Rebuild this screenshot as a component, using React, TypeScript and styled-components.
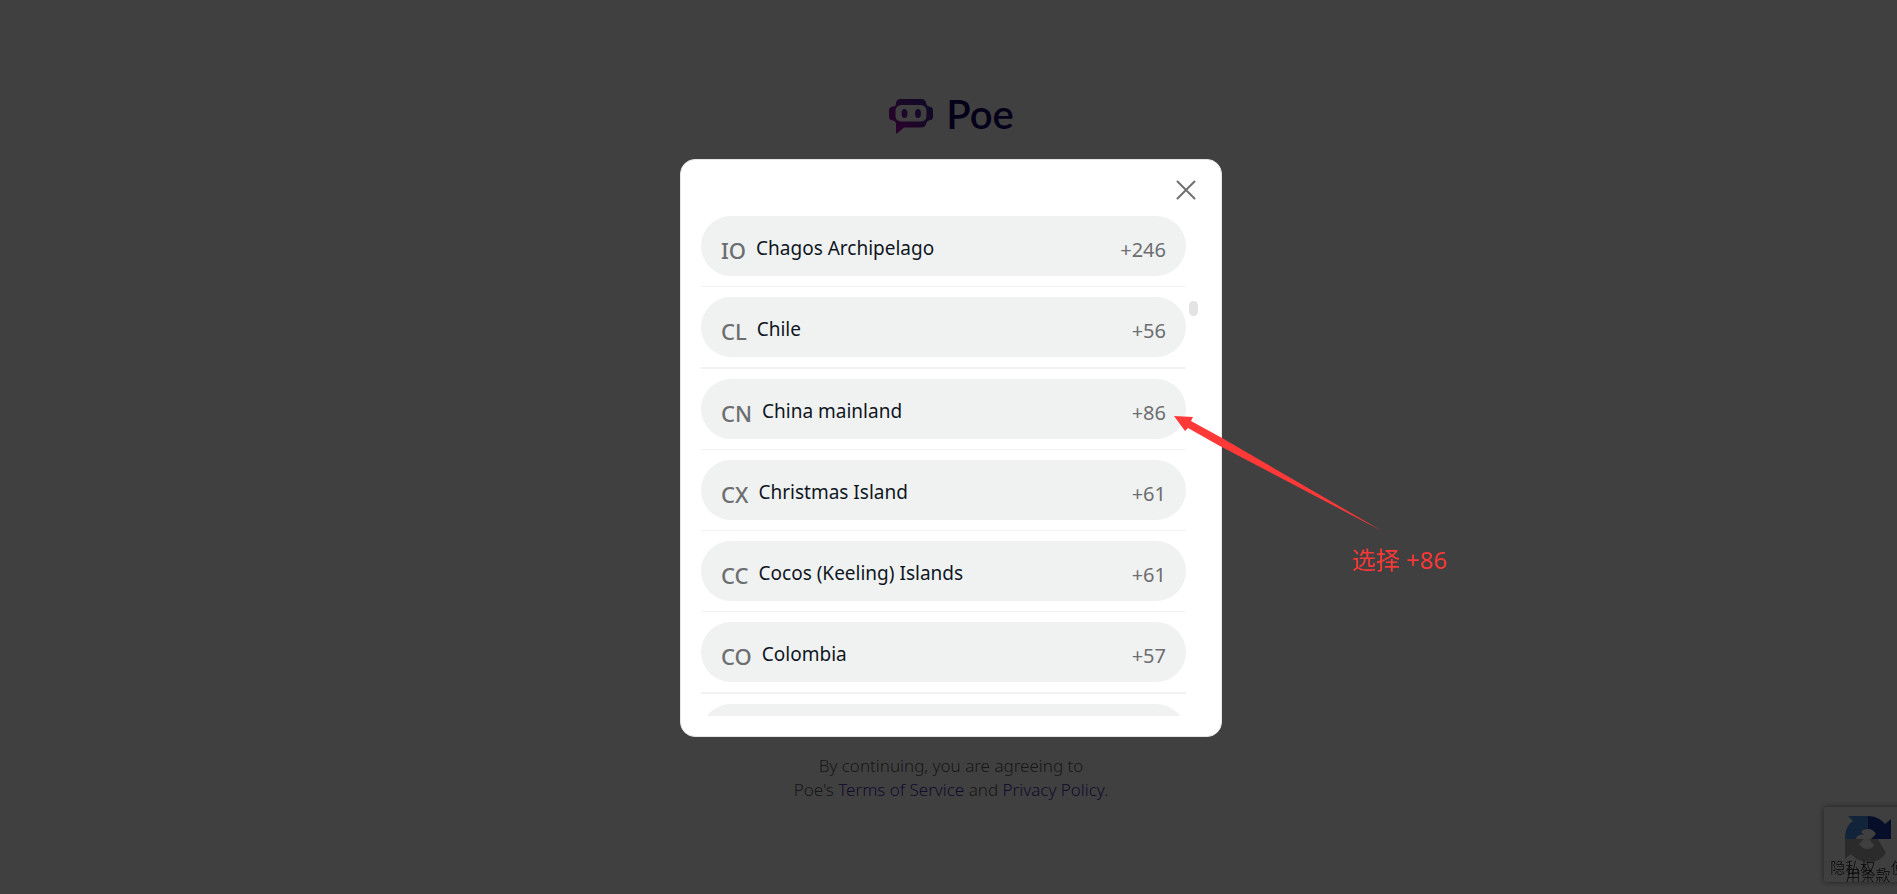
import React from "react";
import styled, { createGlobalStyle } from "styled-components";

const latin = `"Noto Sans", "Open Sans", "Noto Sans CJK SC", sans-serif`;

const GlobalStyle = createGlobalStyle`
  * { box-sizing: border-box; }
  body { margin: 0; background: #fff; font-family: ${latin}; overflow: hidden; }
`;

const Page = styled.div`
  min-height: 100vh;
  display: flex;
  flex-direction: column;
  justify-content: space-between;
  align-items: center;
  padding: 98px 0 92px 5px;
`;

const Brand = styled.div`
  display: flex;
  align-items: flex-start;
  gap: 12px;
`;

const BrandName = styled.h1`
  margin: 0;
  font: 600 40px/32px Lato, sans-serif;
  color: #140064;
`;

const Legal = styled.p`
  margin: 0;
  font-size: 17px;
  font-weight: 300;
  line-height: 24px;
  text-align: center;
  color: #606060;
`;

const LegalLink = styled.a`
  color: #4632b4;
  text-decoration: none;
`;

const RecaptchaBadge = styled.aside`
  position: fixed;
  right: -12px;
  bottom: 12px;
  width: 85px;
  height: 75px;
  padding: 8px 0 0 3px;
  border-radius: 2px;
  background: #fafafa;
  box-shadow: 0 0 6px #808080;
  overflow: hidden;
  text-align: center;

  svg {
    display: block;
    margin: 0 auto;
  }
`;

const BadgeTerms = styled.div`
  font: 300 15px/8px "Noto Sans CJK SC", sans-serif;
  white-space: nowrap;
  color: #111;
`;

const Dash = styled.span`
  margin: 0 2px;
`;

const Overlay = styled.div`
  position: fixed;
  inset: 0;
  display: flex;
  align-items: center;
  justify-content: center;
  padding: 2px 0 0 5px;
  background: rgba(0, 0, 0, 0.75);
`;

const Dialog = styled.section`
  width: 542px;
  max-width: 100%;
  padding: 20px;
  border: 1px solid #e5e5e5;
  border-radius: 15px;
  background: #fff;
`;

const DialogHeader = styled.header`
  display: flex;
  justify-content: flex-end;
  padding-right: 4px;
  margin-bottom: 15px;
`;

const CloseButton = styled.button`
  display: flex;
  width: 21px;
  height: 21px;
  padding: 0;
  border: 0;
  background: none;
  cursor: pointer;
`;

const ListArea = styled.div`
  display: flex;
  gap: 3px;
  height: 500px;
`;

const CountryList = styled.ul`
  flex: none;
  width: 485px;
  margin: 0;
  padding: 0;
  list-style: none;
  overflow: hidden;
`;

const CountryItem = styled.li`
  padding-bottom: 10px;
  margin-bottom: 10px;
  border-bottom: 1px solid #f1f2f2;

  &:nth-child(4n + 2) {
    border-bottom-width: 2px;
  }
`;

const CountryButton = styled.button`
  display: flex;
  align-items: center;
  width: 100%;
  height: 60px;
  padding: 4px 20px 0;
  border: 0;
  border-radius: 30px;
  background: #f0f2f2;
  font: 400 19px/28px ${latin};
  color: #0f1622;
  text-align: left;
  cursor: pointer;
`;

const CountryCode = styled.span`
  margin: 4px 10px 0 0;
  font-size: 22px;
  font-weight: 500;
  color: #6c6e70;
`;

const DialCode = styled.span`
  margin: 4px 0 0 auto;
  font-size: 20px;
  font-weight: 400;
  color: #6c6e70;
`;

const ScrollTrack = styled.div`
  width: 9px;
  padding-top: 85px;
`;

const ScrollThumb = styled.div`
  height: 15px;
  border-radius: 5px;
  background: #e3e3e3;
`;

const Note = styled.div`
  position: absolute;
  left: calc(50% + 225px);
  top: calc(50% - 32px);
  display: flex;
  flex-direction: column;
  width: 274px;
  color: #ff3838;
  pointer-events: none;
`;

const NoteText = styled.span`
  align-self: flex-end;
  margin-top: 12px;
  font: 24px/32px "Noto Sans", "Noto Sans CJK SC", sans-serif;
`;

const countries = [
  { code: "IO", name: "Chagos Archipelago", dial: "+246" },
  { code: "CL", name: "Chile", dial: "+56" },
  { code: "CN", name: "China mainland", dial: "+86" },
  { code: "CX", name: "Christmas Island", dial: "+61" },
  { code: "CC", name: "Cocos (Keeling) Islands", dial: "+61" },
  { code: "CO", name: "Colombia", dial: "+57" },
];

function PoeLogo() {
  return (
    <svg width="46" height="36" viewBox="0 0 46 36" aria-hidden="true">
      <defs>
        <linearGradient id="poe" gradientUnits="userSpaceOnUse" x1="4" y1="34" x2="40" y2="2">
          <stop offset="0" stopColor="#b400b4" />
          <stop offset="0.5" stopColor="#6e1ea0" />
          <stop offset="1" stopColor="#3c2896" />
        </linearGradient>
      </defs>
      <g fill="url(#poe)">
        <path
          fillRule="evenodd"
          d="M13 1H33Q38 1 38.500 6.500Q39 8 41 8.500Q45 9 45 12V19Q45 22 41 22.500Q39 23 38.500 24.500Q38 29.500 33 29.500H16L9 35.500Q8 36 8 34.500V26Q8 23 5 22.500Q1 22 1 19V12Q1 9 5 8.500Q8 8 8 5.500Q8 1 13 1ZM13 7Q7.500 8 7.500 13V18Q7.500 23 13 23.500H33Q38.500 23 38.500 18V13Q38.500 8 33 7Z"
        />
        <ellipse cx="16.500" cy="15.500" rx="3" ry="4.500" />
        <ellipse cx="30" cy="15.500" rx="3" ry="4.500" />
      </g>
    </svg>
  );
}

function RecaptchaLogo() {
  return (
    <svg width="48" height="48" viewBox="0 0 48 48" aria-hidden="true">
      <path fill="#4a90e2" d="M1 24C1 15 4 9 9 6L4 1H24V14Q19 14 17 17L20 20Q13 19 12 24Z" />
      <path fill="#1c3aa9" d="M24 1C31 1 37 4 41 9L47 4V24H27L32 19Q29 14 24 14Z" />
      <path fill="#ababab" d="M1 24H20L15 29Q18 34 24 34Q29 33 30 30L25 24H34L42 38Q36 47 25 47Q14 47 7 39L1 44Z" />
    </svg>
  );
}

export default function App() {
  return (
    <>
      <GlobalStyle />
      <Page>
        <Brand>
          <PoeLogo />
          <BrandName>Poe</BrandName>
        </Brand>
        <Legal>
          By continuing, you are agreeing to
          <br />
          Poe's <LegalLink href="#terms">Terms of Service</LegalLink> and{" "}
          <LegalLink href="#privacy">Privacy Policy</LegalLink>.
        </Legal>
      </Page>
      <RecaptchaBadge>
        <RecaptchaLogo />
        <BadgeTerms>
          隐私权 <Dash>-</Dash> 使
          <br />
          用条款
        </BadgeTerms>
      </RecaptchaBadge>
      <Overlay>
        <Dialog role="dialog" aria-modal="true">
          <DialogHeader>
            <CloseButton aria-label="Close">
              <svg width="21" height="21" viewBox="0 0 21 21" aria-hidden="true">
                <path d="M1.500 1.500L18.500 18.500M18.500 1.500L1.500 18.500" stroke="#6f7072" strokeWidth="2" strokeLinecap="round" />
              </svg>
            </CloseButton>
          </DialogHeader>
          <ListArea>
            <CountryList>
              {countries.map((c) => (
                <CountryItem key={c.code}>
                  <CountryButton>
                    <CountryCode>{c.code}</CountryCode>
                    {c.name}
                    <DialCode>{c.dial}</DialCode>
                  </CountryButton>
                </CountryItem>
              ))}
              <CountryItem>
                <CountryButton tabIndex={-1} />
              </CountryItem>
            </CountryList>
            <ScrollTrack>
              <ScrollThumb />
            </ScrollTrack>
          </ListArea>
        </Dialog>
        <Note>
          <svg width="209" height="117" viewBox="0 0 209 117" aria-hidden="true">
            <path fill="#ff3838" d="M0 1L19 2L17 6L48 23L208 116L44 30L14 13L11 16Z" />
          </svg>
          <NoteText>选择 +86</NoteText>
        </Note>
      </Overlay>
    </>
  );
}
